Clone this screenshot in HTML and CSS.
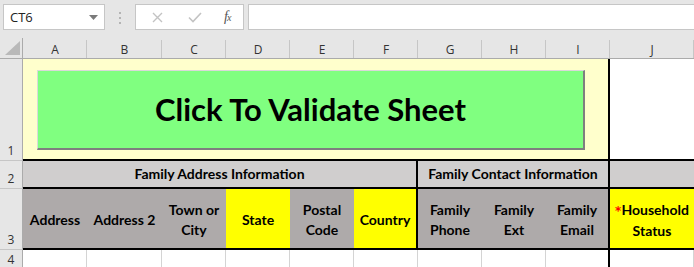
FILE: index.html
```html
<!doctype html>
<html>
<head>
    <meta charset="utf-8">
    <title>Household Sheet</title>
    <link rel="stylesheet" href="styles.css">
</head>
<body>
    <div class="toolbar">
        <div class="namebox">
            <span>CT6</span>
            <svg class="caret" width="9" height="5" viewBox="0 0 9 5"><polygon points="0,0 9,0 4.5,5" fill="#7a7a7a"/></svg>
        </div>
        <svg class="grip" width="3" height="12" viewBox="0 0 3 12">
            <rect x="0" y="0" width="2" height="2" fill="#b4b4b4"/>
            <rect x="0" y="5" width="2" height="2" fill="#b4b4b4"/>
            <rect x="0" y="10" width="2" height="2" fill="#b4b4b4"/>
        </svg>
        <div class="fxbox">
            <svg class="cancel" width="11" height="11" viewBox="0 0 11 11"><path d="M1 1 L10 10 M10 1 L1 10" stroke="#c3c3c3" stroke-width="1.4" fill="none"/></svg>
            <svg class="enter" width="14" height="11" viewBox="0 0 14 11"><path d="M1 5.5 L5 9.5 L13 1" stroke="#c3c3c3" stroke-width="1.6" fill="none"/></svg>
            <span class="fx">f<small>x</small></span>
        </div>
        <div class="formula"></div>
    </div>

    <div class="sheet">
        <div class="corner">
            <svg width="15" height="14" viewBox="0 0 15 14"><polygon points="15,0 15,14 0,14" fill="#b9b9b9"/></svg>
        </div>
        <div class="colhead">A</div>
        <div class="colhead">B</div>
        <div class="colhead">C</div>
        <div class="colhead">D</div>
        <div class="colhead">E</div>
        <div class="colhead">F</div>
        <div class="colhead">G</div>
        <div class="colhead">H</div>
        <div class="colhead">I</div>
        <div class="colhead">J</div>

        <!-- Row 1 -->
        <div class="rowhead">1</div>
        <div class="cell banner">
            <div class="validate">Click To Validate Sheet</div>
        </div>
        <div class="cell row1-end"></div>

        <!-- Row 2 -->
        <div class="rowhead">2</div>
        <div class="cell group address-group">Family Address Information</div>
        <div class="cell group contact-group">Family Contact Information</div>
        <div class="cell group"></div>

        <!-- Row 3 -->
        <div class="rowhead">3</div>
        <div class="cell field">Address</div>
        <div class="cell field">Address 2</div>
        <div class="cell field">Town or<br>City</div>
        <div class="cell field required">State</div>
        <div class="cell field">Postal<br>Code</div>
        <div class="cell field required split">Country</div>
        <div class="cell field">Family<br>Phone</div>
        <div class="cell field">Family<br>Ext</div>
        <div class="cell field split">Family<br>Email</div>
        <div class="cell field required"><span><span class="star">*</span>Household<br>Status</span></div>

        <!-- Row 4 -->
        <div class="rowhead">4</div>
        <div class="cell empty"></div>
        <div class="cell empty"></div>
        <div class="cell empty"></div>
        <div class="cell empty"></div>
        <div class="cell empty"></div>
        <div class="cell empty"></div>
        <div class="cell empty"></div>
        <div class="cell empty"></div>
        <div class="cell empty split"></div>
        <div class="cell empty"></div>
    </div>
</body>
</html>
```

FILE: styles.css
```css
/* Reset */
* { padding:0; margin:0; box-sizing: border-box; }

/* CSS Variables */
:root {
    --chrome: #e6e6e6;
    --chrome-line: #c6c6c6;
    --thick: 2px solid #000;
    --grid: 1px solid #d4d4d4;
    --cell-font: Lato, "Open Sans", sans-serif;
    --ui-font: "Open Sans", "Noto Sans", sans-serif;
}

body {
    width: 694px;
    height: 267px;
    overflow: hidden;
    background-color: var(--chrome);
    font-family: var(--ui-font);
}

/* Formula bar */
.toolbar {
    height: 38px;
    display: flex;
    align-items: flex-start;
    padding: 4px 0 0 3px;
}
.namebox {
    width: 102px;
    height: 26px;
    background-color: #fff;
    border: 1px solid var(--chrome-line);
    display: flex;
    align-items: center;
    justify-content: space-between;
    padding: 0 6px 0 6px;
    font-size: 13px;
    color: #222;
}
.caret { margin-top: 1px; }
.grip { margin: 8px 13px 0 14px; }
.fxbox {
    width: 109px;
    height: 26px;
    background-color: #fff;
    border: 1px solid var(--chrome-line);
    display: flex;
    align-items: center;
    padding-left: 16px;
}
.cancel { margin-right: 25px; }
.enter { margin-right: 22px; }
.fx {
    font-family: "Liberation Serif", serif;
    font-style: italic;
    font-size: 14px;
    color: #555;
    letter-spacing: -1px;
}
.fx small { font-size: 10px; }
.formula {
    flex: 1;
    height: 26px;
    margin-left: 4px;
    background-color: #fff;
    border: 1px solid var(--chrome-line);
    border-right: none;
}

/* Sheet grid */
.sheet {
    display: grid;
    grid-template-columns: 23px 64px 75px 64px 64px 64px 64px 64px 64px 64px 1fr;
    grid-template-rows: 21px 102px 28px 61px 20px;
    background-color: #fff;
}
.corner {
    background-color: var(--chrome);
    border-right: 1px solid #ababab;
    border-bottom: 1px solid #ababab;
    display: flex;
    align-items: flex-end;
    justify-content: flex-end;
    padding: 0 2px 3px 0;
}
.colhead {
    background-color: var(--chrome);
    border-bottom: 1px solid #ababab;
    font-size: 12px;
    color: #333;
    display: flex;
    align-items: center;
    justify-content: center;
    padding-top: 3px;
    position: relative;
}
.colhead::after {
    content: "";
    position: absolute;
    right: 0;
    top: 2px;
    bottom: 0;
    border-right: 1px solid var(--chrome-line);
}
.rowhead {
    background-color: var(--chrome);
    border-right: 1px solid #ababab;
    border-bottom: 1px solid var(--chrome-line);
    font-size: 12px;
    color: #333;
    text-align: center;
    display: flex;
    align-items: flex-end;
    justify-content: center;
    padding-bottom: 1px;
}

/* Cells */
.cell {
    font-family: var(--cell-font);
    font-weight: bold;
    font-size: 14px;
    line-height: 20px;
    color: #000;
    text-align: center;
    display: flex;
    align-items: center;
    justify-content: center;
}

/* Row 1 */
.banner {
    grid-column: 2 / 11;
    background-color: #ffffcc;
    border-right: var(--thick);
    border-bottom: var(--thick);
    align-items: flex-start;
    justify-content: flex-start;
    padding: 11px 0 0 14px;
}
.validate {
    width: 548px;
    height: 80px;
    background-color: #80ff80;
    border-top: 1px solid #d9d9d9;
    border-left: 1px solid #d9d9d9;
    border-right: 2px solid #7f7f7f;
    border-bottom: 2px solid #7f7f7f;
    display: flex;
    align-items: center;
    justify-content: center;
    font-size: 31px;
    padding-bottom: 2px;
}
.row1-end {
    border-bottom: var(--thick);
}

/* Row 2 */
.group {
    background-color: #d0cece;
    border-bottom: var(--thick);
}
.address-group {
    grid-column: 2 / 8;
    border-right: var(--thick);
}
.contact-group {
    grid-column: 8 / 11;
    border-right: var(--thick);
}

/* Row 3 */
.field {
    background-color: #aeaaaa;
    border-bottom: var(--thick);
    padding-top: 3px;
}
.field.required { background-color: #ffff00; }
.split { border-right: var(--thick); }
.star {
    color: #ff0000;
    font-family: "DejaVu Sans", sans-serif;
    font-size: 12px;
}

/* Row 4 */
.empty {
    border-right: var(--grid);
    border-bottom: var(--grid);
}
.empty.split { border-right: var(--thick); }
```
